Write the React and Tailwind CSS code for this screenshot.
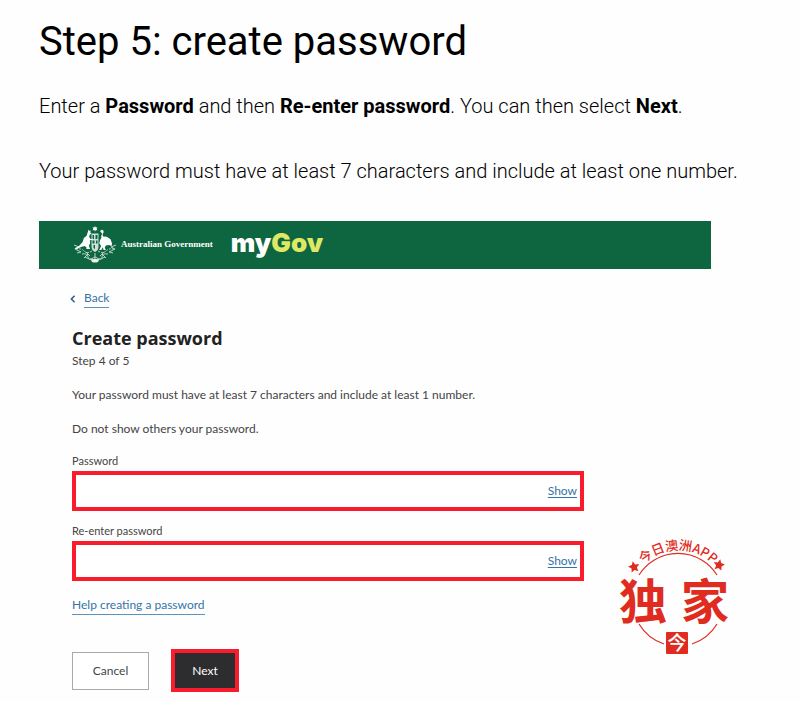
import { useState } from "react";

function Crest() {
  return (
    <svg viewBox="0 0 44 38" className="h-[38px] w-11 shrink-0 fill-white" aria-hidden="true">
      {/* star */}
      <path d="M22 0l.8 1.600 1.700-.3-.9 1.500.9 1.500-1.700-.3-.8 1.600-.8-1.600-1.700.3.9-1.500-.9-1.500 1.700.3z" />
      {/* kangaroo */}
      <path d="M15.500 3.500l1 1.500 1.300-.6-.5 1.800 1.200 1.700-1.800.5-.5 2.600 1.300 2 2.500-.3-.1 1-3 .6.3 3-1.300 2.500 1.200 3.200h-4l.6-1.200-2-1.800-3 .8-4.900 2.200-2.500-.6 4.700-2.400 3.600-4 1.300-4 2.700-2.300 1.200-3.600z" />
      {/* emu */}
      <path d="M27 5l2-1.200 1.400.8.2 1.700-1.100 2.200.6 2 3.700.3 3.800 2.500 1.500 4.500-.8 2.500-1.900-1.300-3.600.6-1 2.200 1 2.200h-2.200l-.8-2.700-1.500 2.700h-2l1.800-4-1.800-2.700.8-3.400 1.300-2-.2-1.900 1-2.200z" />
      {/* shield */}
      <path
        opacity=".8"
        fillRule="evenodd"
        d="M18.500 7.500h7v13q0 4-3.500 5.500-3.500-1.500-3.500-5.500zM19.500 9v4h1.500v-4zm3 0v4h2v-4zm-3 5.500v3h2v-3zm3.500 0v3h1.500v-3zm-2.500 4.500v3l1.500 1v-4z"
      />
      {/* wattle and scroll */}
      <g fill="none" stroke="#fff" strokeWidth="1" opacity=".7">
        <path d="M3 23q5-1 8 2t8 0M41 23q-5-1-8 2t-8 0" strokeDasharray="2 1" />
        <path d="M1 19l5 2-4 2 6 3-4 1M43 19l-5 2 4 2-6 3 4 1" />
        <path d="M9 28q6-1 6 3t7 0q7 4 7 0t6-3" />
        <path d="M12 31q4 3 10 3t10-3M15 28l-4 4M29 28l4 4" />
        <path d="M13 26l4 4M31 26l-4 4M22 27v7" />
      </g>
      <path d="M18 34q4-2 8 0l-1 2q-3 1-6 0z" opacity=".9" />
    </svg>
  );
}

function PasswordField({ id, label }) {
  const [visible, setVisible] = useState(false);

  return (
    <div className="mb-[10px]">
      <label htmlFor={id} className="block text-[11px] leading-5">
        {label}
      </label>
      <div className="flex h-10 items-center border-4 border-[#f91c2c] bg-white">
        <input
          id={id}
          type={visible ? "text" : "password"}
          className="h-full min-w-0 flex-1 px-2 text-xs outline-none"
        />
        <button
          type="button"
          onClick={() => setVisible(!visible)}
          className="px-[3px] text-xs text-[#3474a8] underline underline-offset-2"
        >
          Show
        </button>
      </div>
    </div>
  );
}

function Stamp() {
  return (
    <svg
      viewBox="0 -16 120 140"
      className="absolute top-[520px] left-[618px] h-[140px] w-[120px] overflow-visible fill-[#e02b20] font-['Noto_Sans_CJK_SC',sans-serif]"
      role="img"
      aria-label="今日澳洲APP 独家"
    >
      <defs>
        <path id="stamp-arc" d="M10 64a50 50 0 0 1 100 0" />
        <path id="stamp-star" d="M0-6l1.700 3.700 4 .5-3 2.800.8 4-3.500-2-3.500 2 .8-4-3-2.800 4-.5z" />
      </defs>
      <g fill="none" stroke="#e02b20" strokeWidth="1.2">
        <path d="M21 39a46 46 0 0 1 78 0M21 88a46 46 0 0 0 25 20M99 88a46 46 0 0 1-25 20" />
      </g>
      <text fontSize="13" fontWeight="500" textAnchor="middle">
        <textPath href="#stamp-arc" startOffset="50%">
          今日澳洲APP
        </textPath>
      </text>
      <use href="#stamp-star" transform="translate(16 31) rotate(-12)" />
      <use href="#stamp-star" transform="translate(101 29) rotate(12)" />
      <text x="1" y="83" fontSize="48" fontWeight="700">
        独
      </text>
      <text x="63" y="83" fontSize="48" fontWeight="700">
        家
      </text>
      <rect x="48" y="96" width="22" height="22" rx="1" />
      <text x="59" y="114" fontSize="19" fontWeight="500" textAnchor="middle" fill="#fff">
        今
      </text>
    </svg>
  );
}

export default function App() {
  return (
    <main className="relative min-h-screen bg-[#fefefe] px-[39px] pt-4 pb-2 font-['Roboto',sans-serif] text-black">
      <h1 className="text-[40px] leading-[52px]">Step 5: create password</h1>
      <p className="mt-6 text-xl leading-7 font-light">
        Enter a <strong className="font-bold">Password</strong> and then{" "}
        <strong className="font-bold">Re-enter password</strong>. You can then select{" "}
        <strong className="font-bold">Next</strong>.
      </p>
      <p className="mt-[37px] text-xl leading-7 font-light">
        Your password must have at least 7 characters and include at least one number.
      </p>

      <section className="mt-9 max-w-[672px] font-['Lato',sans-serif] text-[#444]">
        <header className="flex h-12 items-center bg-[#0d6640] pl-[34px]">
          <Crest />
          <span className="ml-1 font-['Liberation_Serif',serif] text-[9px] font-bold text-white">
            Australian Government
          </span>
          <span className="mb-1 ml-[18px] font-['Inter',sans-serif] text-[26px] leading-8 font-black text-white">
            my<span className="text-[#dfe865]">Gov</span>
          </span>
        </header>

        <form className="mt-5 max-w-[545px] pl-[33px]" onSubmit={(e) => e.preventDefault()}>
          <div className="-ml-[2px] flex items-center gap-2 text-xs">
            <svg viewBox="0 0 6 10" className="h-2 w-[6px] fill-none stroke-[#2f6090] stroke-2" aria-hidden="true">
              <path d="M5 1L1 5l4 4" />
            </svg>
            <a href="#back" className="border-b border-[#5b93bd] leading-[18px] text-[#3474a8]">
              Back
            </a>
          </div>

          <h2 className="mt-[18px] font-['Open_Sans',sans-serif] text-lg leading-6 font-bold text-[#222]">
            Create password
          </h2>
          <p className="mt-px text-xs leading-5">Step 4 of 5</p>
          <p className="mt-[14px] text-xs leading-5">
            Your password must have at least 7 characters and include at least 1 number.
          </p>
          <p className="mt-[14px] mb-3 text-xs leading-5">Do not show others your password.</p>

          <PasswordField id="password" label="Password" />
          <PasswordField id="re-enter" label="Re-enter password" />

          <a href="#help" className="mt-1 inline-block border-b border-[#5b93bd] text-xs leading-[18px] text-[#3474a8]">
            Help creating a password
          </a>

          <div className="mt-[34px] flex items-center gap-[22px]">
            <button type="button" className="h-[38px] w-[77px] border border-[#aaa] bg-white text-xs">
              Cancel
            </button>
            <button type="submit" className="h-[43px] w-[68px] border-4 border-[#f91c2c] bg-[#2d2d2f] text-xs text-white">
              Next
            </button>
          </div>
        </form>
      </section>

      <Stamp />
    </main>
  );
}
